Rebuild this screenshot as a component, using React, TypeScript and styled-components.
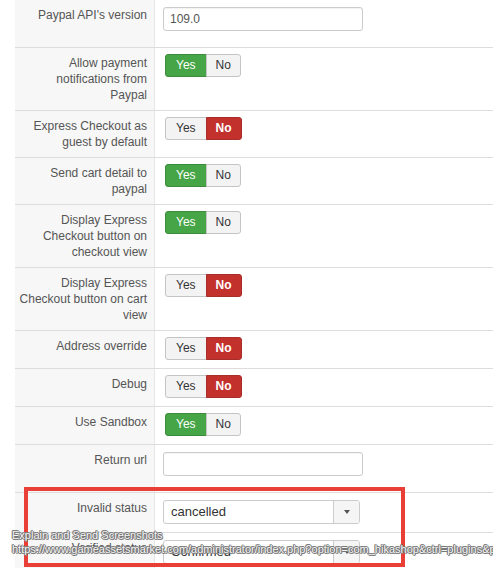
import React from "react";
import styled, { createGlobalStyle } from "styled-components";

const Global = createGlobalStyle`
  html, body { margin: 0; padding: 0; background: #fff; }
  body { font-family: "Liberation Sans", Arial, sans-serif; font-size: 12px; color: #555; overflow: hidden; }
`;

const Page = styled.div`
  position: relative;
  width: 493px;
  height: 568px;
  overflow: hidden;
  padding-left: 15px;
  box-sizing: border-box;
`;

const Row = styled.div`
  display: grid;
  grid-template-columns: 140px 1fr;
  border-bottom: 1px solid #dddddd;
`;

const Label = styled.div`
  background: #f7f7f7;
  border-right: 1px solid #e6e6e6;
  text-align: right;
  padding: 7px 7px 7px 3px;
  line-height: 16px;
  font-size: 12px;
  color: #555;
  box-sizing: border-box;
`;

const Value = styled.div`
  padding: 6px 0 8px 8px;
  display: flex;
  align-items: flex-start;
`;

const TextInput = styled.div`
  width: 200px;
  height: 24px;
  box-sizing: border-box;
  margin: 1px 0 8px;
  border: 1px solid #cccccc;
  border-radius: 3px;
  padding: 0 6px;
  line-height: 22px;
  font-size: 12px;
  color: #555;
  box-shadow: inset 0 1px 1px rgba(0, 0, 0, 0.05);
`;

const Toggle = styled.div`
  display: flex;
  margin-left: 2px;
  height: 23px;
`;

const Opt = styled.div<{ $on?: "yes" | "no"; $side: "l" | "r" }>`
  box-sizing: border-box;
  height: 23px;
  line-height: 21px;
  padding: 0 ${(p) => (p.$side === "l" ? "10px" : "9px")};
  min-width: ${(p) => (p.$side === "l" ? "41px" : "35px")};
  text-align: center;
  font-size: 12px;
  border: 1px solid
    ${(p) =>
      p.$on === "yes" ? "#3d8b3d" : p.$on === "no" ? "#a82e2a" : "#c4c4c4"};
  ${(p) => (p.$side === "l" ? "border-radius: 3px 0 0 3px;" : "border-radius: 0 3px 3px 0;")}
  ${(p) => (p.$side === "r" ? "margin-left: -1px;" : "")}
  background: ${(p) =>
    p.$on === "yes" ? "#46a546" : p.$on === "no" ? "#c3312d" : "#f3f3f3"};
  color: ${(p) => (p.$on ? "#fff" : "#333")};
  font-weight: ${(p) => (p.$on === "no" ? "bold" : "normal")};
`;

const Select = styled.div`
  width: 197px;
  height: 24px;
  box-sizing: border-box;
  margin-top: 1px;
  border: 1px solid #cccccc;
  border-radius: 3px;
  display: flex;
  overflow: hidden;
`;

const SelectText = styled.div`
  flex: 1;
  padding: 0 7px;
  line-height: 22px;
  font-size: 13px;
  color: #333;
`;

const SelectBtn = styled.div`
  width: 25px;
  background: #f5f5f5;
  border-left: 1px solid #cccccc;
  display: flex;
  align-items: center;
  justify-content: center;
`;

const Caret = styled.span`
  width: 0;
  height: 0;
  border-left: 3.5px solid transparent;
  border-right: 3.5px solid transparent;
  border-top: 4px solid #555;
`;

const Highlight = styled.div`
  position: absolute;
  left: 24px;
  top: 487px;
  width: 381px;
  height: 80px;
  box-sizing: border-box;
  border: 4px solid #ea3f36;
  pointer-events: none;
`;

const Watermark = styled.div<{ $top: number }>`
  position: absolute;
  left: 12px;
  top: ${(p) => p.$top}px;
  font-family: "Liberation Sans", Arial, sans-serif;
  font-size: 11px;
  line-height: 13px;
  white-space: nowrap;
  color: rgba(255, 255, 255, 0.95);
  text-shadow: 1px 0 0 #777, -1px 0 0 #777, 0 1px 0 #777, 0 -1px 0 #777,
    1px 1px 0 #999, -1px -1px 0 #999;
`;

type YN = "yes" | "no";

const YesNo: React.FC<{ v: YN }> = ({ v }) => (
  <Toggle>
    <Opt $side="l" $on={v === "yes" ? "yes" : undefined}>Yes</Opt>
    <Opt $side="r" $on={v === "no" ? "no" : undefined}>No</Opt>
  </Toggle>
);

const toggles: { label: React.ReactNode; v: YN }[] = [
  { label: "Allow payment notifications from Paypal", v: "yes" },
  { label: "Express Checkout as guest by default", v: "no" },
  { label: "Send cart detail to paypal", v: "yes" },
  { label: "Display Express Checkout button on checkout view", v: "yes" },
  { label: "Display Express Checkout button on cart view", v: "no" },
  { label: "Address override", v: "no" },
  { label: "Debug", v: "no" },
  { label: "Use Sandbox", v: "yes" },
];

export default function App() {
  return (
    <Page>
      <Global />
      <Row>
        <Label>Paypal API's version</Label>
        <Value>
          <TextInput>109.0</TextInput>
        </Value>
      </Row>
      {toggles.map((t, i) => (
        <Row key={i}>
          <Label>{t.label}</Label>
          <Value>
            <YesNo v={t.v} />
          </Value>
        </Row>
      ))}
      <Row>
        <Label>Return url</Label>
        <Value>
          <TextInput />
        </Value>
      </Row>
      <Row>
        <Label>Invalid status</Label>
        <Value>
          <Select>
            <SelectText>cancelled</SelectText>
            <SelectBtn>
              <Caret />
            </SelectBtn>
          </Select>
        </Value>
      </Row>
      <Row>
        <Label>Verified status</Label>
        <Value>
          <Select>
            <SelectText>Confirmed</SelectText>
            <SelectBtn>
              <Caret />
            </SelectBtn>
          </Select>
        </Value>
      </Row>
      <Highlight />
      <Watermark $top={529}>Explain and Send Screenshots</Watermark>
      <Watermark $top={543}>
        https://www.gameassetsmarket.com/administrator/index.php?option=com_hikashop&amp;ctrl=plugins&amp;plugin_type=payment
      </Watermark>
    </Page>
  );
}
